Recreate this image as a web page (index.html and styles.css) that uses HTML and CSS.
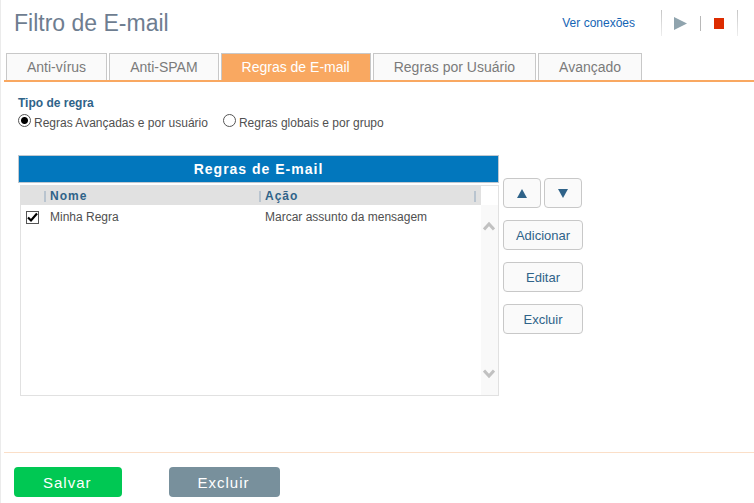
FILE: index.html
```html
<!DOCTYPE html>
<html lang="pt-BR">
<head>
  <meta charset="UTF-8">
  <meta name="viewport" content="width=device-width, initial-scale=1.0">
  <title>Filtro de E-mail</title>
  <link rel="stylesheet" href="styles.css">
</head>
<body>
  <form class="page">
    <header class="header">
      <h1 class="title">Filtro de E-mail</h1>
      <a class="connections" href="#">Ver conexões</a>
      <div class="service">
        <button type="button" class="icon-button" aria-label="Iniciar">
          <svg width="13" height="13" viewBox="0 0 13 13"><path d="M0 0L13 6.5L0 13Z" fill="#90a4ae"/></svg>
        </button>
        <span class="separator"></span>
        <button type="button" class="icon-button" aria-label="Parar">
          <svg width="10" height="11" viewBox="0 0 10 11"><path d="M0 0H10V11H0Z" fill="#dd2c00"/></svg>
        </button>
      </div>
    </header>

    <nav class="tabs">
      <a class="tab" href="#">Anti-vírus</a>
      <a class="tab" href="#">Anti-SPAM</a>
      <a class="tab active" href="#">Regras de E-mail</a>
      <a class="tab" href="#">Regras por Usuário</a>
      <a class="tab" href="#">Avançado</a>
    </nav>

    <main class="content">
      <fieldset class="rule-type">
        <legend>Tipo de regra</legend>
        <div class="options">
          <label class="option"><input type="radio" name="tipo" class="radio" checked>Regras Avançadas e por usuário</label>
          <label class="option"><input type="radio" name="tipo" class="radio">Regras globais e por grupo</label>
        </div>
      </fieldset>

      <div class="rules">
        <section class="panel">
          <h2 class="panel-title">Regras de E-mail</h2>
          <div class="list">
            <table class="table">
              <thead>
                <tr>
                  <th class="col-check"></th>
                  <th class="col-name">Nome</th>
                  <th class="col-action">Ação</th>
                </tr>
              </thead>
              <tbody>
                <tr>
                  <td class="col-check"><input type="checkbox" class="checkbox" aria-label="Minha Regra" checked></td>
                  <td>Minha Regra</td>
                  <td>Marcar assunto da mensagem</td>
                </tr>
              </tbody>
            </table>
            <div class="scrollbar">
              <svg width="12" height="10" viewBox="0 0 12 10"><path d="M1 8.5L6 3L11 8.5" fill="none" stroke="#c1c1c1" stroke-width="3"/></svg>
              <svg width="12" height="10" viewBox="0 0 12 10"><path d="M1 1.5L6 7L11 1.5" fill="none" stroke="#c1c1c1" stroke-width="3"/></svg>
            </div>
          </div>
        </section>

        <div class="actions">
          <div class="order">
            <button type="button" class="button" aria-label="Mover para cima">
              <svg width="10" height="9" viewBox="0 0 10 9"><path d="M5 0L10 9H0Z" fill="#2f6389"/></svg>
            </button>
            <button type="button" class="button" aria-label="Mover para baixo">
              <svg width="10" height="9" viewBox="0 0 10 9"><path d="M0 0H10L5 9Z" fill="#2f6389"/></svg>
            </button>
          </div>
          <button type="button" class="button">Adicionar</button>
          <button type="button" class="button">Editar</button>
          <button type="button" class="button">Excluir</button>
        </div>
      </div>
    </main>

    <footer class="footer">
      <button type="submit" class="submit save">Salvar</button>
      <button type="button" class="submit delete">Excluir</button>
    </footer>
  </form>
</body>
</html>
```

FILE: styles.css
```css
* {
  box-sizing: border-box;
}

body {
  margin: 0;
  background: #ffffff;
  color: #505050;
  font-family: "Liberation Sans", Arial, sans-serif;
  font-size: 12px;
  line-height: 16px;
}

button {
  font-family: inherit;
  cursor: pointer;
}

.page {
  display: flex;
  flex-direction: column;
  min-height: 100vh;
  padding-left: 3px;
  border-left: 1px solid #ebebeb;
}

/* Header */
.header {
  display: flex;
  align-items: center;
  padding: 7px 16px 9px 10px;
}

.title {
  flex: 1;
  margin: 0;
  color: #6e7d90;
  font-size: 23px;
  line-height: 32px;
  font-weight: normal;
}

.connections {
  margin-right: 26px;
  color: #1464b4;
  text-decoration: none;
}

.service {
  display: flex;
  align-items: center;
  gap: 13px;
  height: 26px;
  padding: 0 13px 0 12px;
  border: 1px solid;
  border-width: 0 1px;
  border-image: linear-gradient(#c4c4c4, #f0f0f0) 1;
}

.icon-button {
  display: flex;
  padding: 0;
  border: none;
  background: none;
}

.separator {
  width: 1px;
  height: 15px;
  background: #b8b8b8;
}

/* Tabs */
.tabs {
  display: flex;
  gap: 2px;
  margin-top: 5px;
  padding-left: 2px;
  border-bottom: 2px solid #f9a861;
}

.tab {
  padding: 5px 20px;
  border: 1px solid #c8c8c8;
  border-bottom: none;
  background: #fafafa;
  color: #7b7b7b;
  font-size: 14px;
  text-decoration: none;
}

.tab.active {
  background: #f9a861;
  color: #ffffff;
}

/* Content */
.content {
  flex: 1;
  padding: 13px 14px;
}

.rule-type {
  margin: 0;
  padding: 0;
  border: none;
}

.rule-type legend {
  padding: 0;
  color: #2f6389;
  font-weight: bold;
}

.options {
  display: flex;
  gap: 15px;
  padding-top: 2px;
}

.option {
  display: flex;
  gap: 3px;
  line-height: 20px;
}

.radio,
.checkbox {
  appearance: none;
  width: 13px;
  height: 13px;
  margin: 0;
  border: 1px solid #555555;
  background: #ffffff;
}

.radio {
  margin-top: 1px;
  border-radius: 50%;
}

.radio:checked {
  background: radial-gradient(circle, #000000 3px, #ffffff 4px);
}

.checkbox {
  display: block;
}

.checkbox:checked {
  background: url('data:image/svg+xml,<svg xmlns="http://www.w3.org/2000/svg" viewBox="0 0 11 11"><path d="M1 5.5L4 8.5L10 1.5" fill="none" stroke="black" stroke-width="2.2"/></svg>');
}

.rules {
  display: flex;
  gap: 4px;
  margin-top: 22px;
}

.panel {
  flex: 0 1 481px;
}

.panel-title {
  margin: 0;
  padding: 5px;
  border: 1px solid #c0c8d0;
  background: #0277bd;
  color: #ffffff;
  font-size: 14px;
  letter-spacing: 1px;
  text-align: center;
}

.list {
  display: flex;
  align-items: flex-start;
  height: 211px;
  margin: 2px 0 0 2px;
  border: 1px solid #e1e1e1;
}

.table {
  flex: 1;
  border-collapse: collapse;
  table-layout: fixed;
}

.table th {
  padding: 2px 0 1px;
  background: #e1e1e1;
  color: #2f6389;
  letter-spacing: 1px;
  text-align: left;
}

.table td {
  padding: 4px 0;
}

.table th::before {
  content: "";
  display: inline-block;
  width: 2px;
  height: 11px;
  margin-right: 4px;
  background: #b9c4cf;
  vertical-align: -2px;
}

.table td + td {
  padding-left: 6px;
}

.table .col-check {
  width: 23px;
  padding-left: 5px;
}

.table .col-check::before {
  content: none;
}

.col-name {
  width: 215px;
}

.table .col-action {
  background: linear-gradient(#b9c4cf, #b9c4cf) right 5px top 5px / 2px 11px no-repeat #e1e1e1;
}

.scrollbar {
  display: flex;
  flex-direction: column;
  justify-content: space-between;
  align-items: center;
  align-self: stretch;
  width: 17px;
  margin-top: 19px;
  padding: 16px 1px 16px 0;
  background: #f9f9f9;
}

/* Side buttons */
.actions {
  display: flex;
  flex-direction: column;
  gap: 12px;
  width: 80px;
  padding-top: 23px;
}

.order {
  display: flex;
  gap: 3px;
}

.order .button {
  width: 38px;
}

.button {
  display: flex;
  justify-content: center;
  align-items: center;
  height: 30px;
  padding: 0;
  border: 1px solid #c8c8c8;
  border-radius: 4px;
  background: #fafafa;
  color: #2f6389;
  font-size: 13px;
}

/* Footer */
.footer {
  display: flex;
  gap: 47px;
  padding: 14px 10px 6px;
  border-top: 1px solid #fbdfc8;
}

.submit {
  height: 30px;
  padding: 0 30px 0 29px;
  border: none;
  border-radius: 4px;
  color: #ffffff;
  font-size: 15px;
  letter-spacing: 1px;
}

.save {
  background: #00c853;
}

.delete {
  background: #78909c;
}
```
